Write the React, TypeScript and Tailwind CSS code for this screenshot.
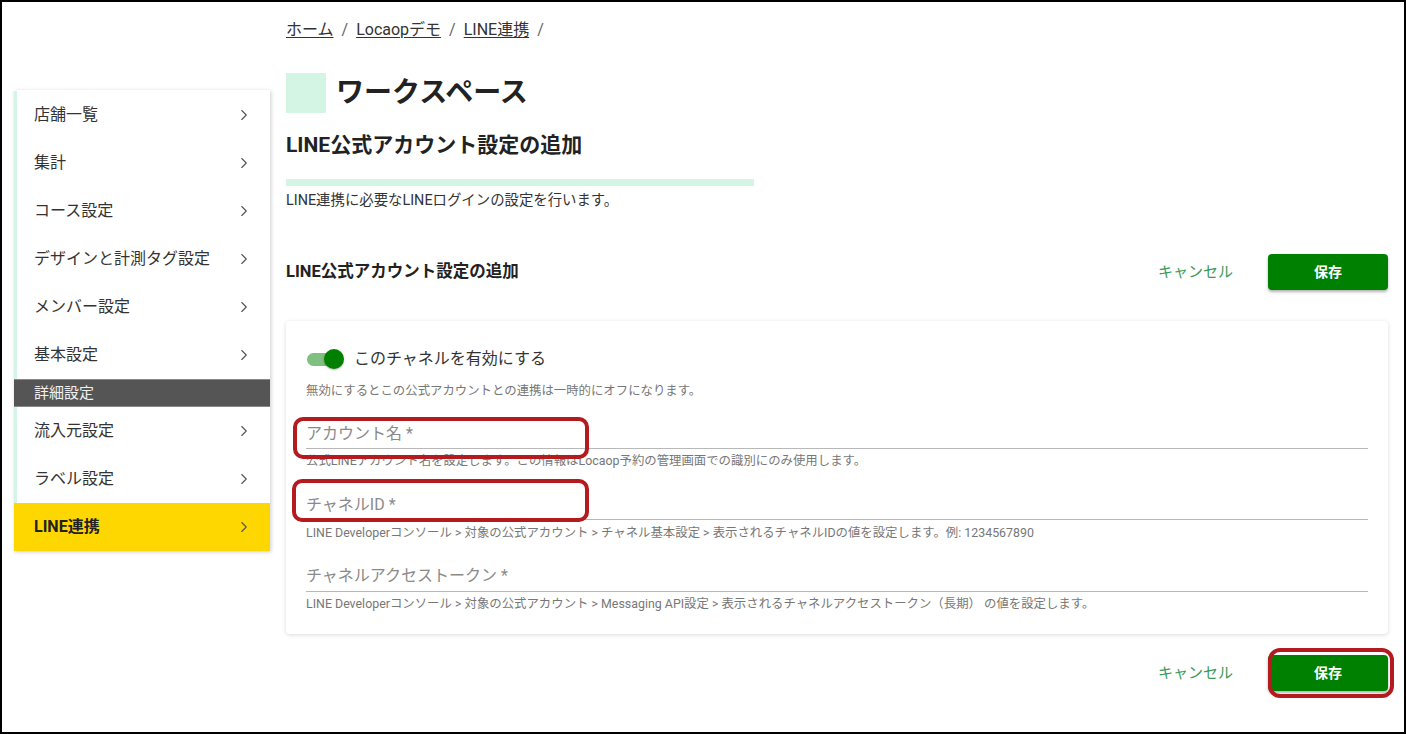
import React from "react";
import { ChevronRight } from "lucide-react";

const font = { fontFamily: 'Roboto, "Noto Sans CJK JP", sans-serif' };

function NavItem({ label }: { label: string }) {
  return (
    <div className="h-[48px] flex items-center justify-between border-l-[3px] border-[#d4f5e5] pl-[17px] pr-[17px] text-[16px] text-[#333]">
      <span>{label}</span>
      <ChevronRight size={18} strokeWidth={1.5} className="text-[#555]" />
    </div>
  );
}

function Field({
  label,
  help,
  mt,
  pb,
  hmt,
}: {
  label: string;
  help: string;
  mt: string;
  pb: string;
  hmt: string;
}) {
  return (
    <div>
      <div className={`${mt} ${pb} border-b border-[#b8b8b8] text-[16px] leading-[20px] text-[#8a8a8a]`}>
        {label}
      </div>
      <p className={`${hmt} h-[16px] text-[12.4px] leading-[16px] text-[#777]`}>{help}</p>
    </div>
  );
}

function Actions() {
  return (
    <div className="flex items-center gap-[35px]">
      <span className="text-[15px] text-[#3c9a56]">キャンセル</span>
      <button className="w-[120px] h-[36px] rounded-[4px] bg-[#008000] text-white text-[14px] font-bold shadow-[0_2px_3px_rgba(0,0,0,0.3)]">
        保存
      </button>
    </div>
  );
}

export default function App() {
  return (
    <div
      style={font}
      className="relative w-[1406px] h-[734px] border-2 border-black bg-white overflow-hidden"
    >
      <div className="flex items-start">
        {/* Sidebar */}
        <div className="ml-[12px] mt-[88px] w-[256px] bg-white shadow-[1px_1px_4px_rgba(0,0,0,0.2)]">
          <div className="pt-[1px]" />
          <NavItem label="店舗一覧" />
          <NavItem label="集計" />
          <NavItem label="コース設定" />
          <NavItem label="デザインと計測タグ設定" />
          <NavItem label="メンバー設定" />
          <NavItem label="基本設定" />
          <div className="h-[28px] bg-[#555] border-y border-[#888] flex items-center pl-[20px] text-[15px] text-[#f0f0f0]">
            詳細設定
          </div>
          <NavItem label="流入元設定" />
          <NavItem label="ラベル設定" />
          <div className="h-[48px] flex items-center justify-between bg-[#ffd700] pl-[20px] pr-[17px] text-[16px] font-bold text-[#222]">
            <span>LINE連携</span>
            <ChevronRight size={18} strokeWidth={1.5} className="text-[#555]" />
          </div>
        </div>

        {/* Main */}
        <div className="ml-[16px] w-[1102px]">
          <div className="mt-[18px] h-[20px] flex items-center gap-[8px] text-[16px] text-[#333]">
            <span className="underline underline-offset-2">ホーム</span>
            <span className="text-[#666]">/</span>
            <span className="underline underline-offset-2">Locaopデモ</span>
            <span className="text-[#666]">/</span>
            <span className="underline underline-offset-2">LINE連携</span>
            <span className="text-[#666]">/</span>
          </div>

          <div className="mt-[33px] flex items-center gap-[10px]">
            <div className="w-[40px] h-[40px] bg-[#d4f5e4]" />
            <h1 className="text-[28px] font-bold text-[#222] leading-[40px]">ワークスペース</h1>
          </div>

          <h2 className="mt-[19px] h-[26px] leading-[26px] text-[21px] font-bold text-[#222]">
            LINE公式アカウント設定の追加
          </h2>

          <div className="mt-[21px] w-[468px] h-[7px] bg-[#d4f5e4]" />

          <p className="mt-[6px] h-[18px] text-[14.4px] leading-[18px] text-[#333]">
            LINE連携に必要なLINEログインの設定を行います。
          </p>

          <div className="mt-[44px] h-[36px] flex items-center justify-between">
            <h3 className="text-[16.5px] font-bold text-[#222]">LINE公式アカウント設定の追加</h3>
            <Actions />
          </div>

          <div className="mt-[31px] rounded-[4px] bg-white shadow-[0_1px_4px_rgba(0,0,0,0.15)] px-[20px] pt-[26px] pb-[22px]">
            <div className="h-[24px] flex items-center gap-[10px]">
              <div className="relative w-[38px] h-[20px] flex items-center">
                <div className="w-[34px] h-[13px] rounded-full bg-[#7fbf7f] ml-[1px]" />
                <div className="absolute right-0 top-0 w-[20px] h-[20px] rounded-full bg-[#008000] shadow-[0_1px_2px_rgba(0,0,0,0.3)]" />
              </div>
              <span className="text-[16px] text-[#333]">このチャネルを有効にする</span>
            </div>
            <p className="mt-[12px] h-[16px] text-[12.4px] leading-[16px] text-[#777]">
              無効にするとこの公式アカウントとの連携は一時的にオフになります。
            </p>

            <Field
              label="アカウント名 *"
              help="公式LINEアカウント名を設定します。この情報はLocaop予約の管理画面での識別にのみ使用します。"
              mt="mt-[25px]"
              pb="pb-[4px]"
              hmt="mt-[4px]"
            />
            <Field
              label="チャネルID *"
              help="LINE Developerコンソール > 対象の公式アカウント > チャネル基本設定 > 表示されるチャネルIDの値を設定します。例: 1234567890"
              mt="mt-[26px]"
              pb="pb-[4px]"
              hmt="mt-[5px]"
            />
            <Field
              label="チャネルアクセストークン *"
              help="LINE Developerコンソール > 対象の公式アカウント > Messaging API設定 > 表示されるチャネルアクセストークン（長期） の値を設定します。"
              mt="mt-[25px]"
              pb="pb-[5px]"
              hmt="mt-[4px]"
            />
          </div>

          <div className="mt-[21px] h-[36px] flex items-center justify-end">
            <Actions />
          </div>
        </div>
      </div>

      {/* Red annotation outlines */}
      <div className="absolute left-[291px] top-[415px] w-[296px] h-[42px] rounded-[10px] border-[4px] border-[#b31b1f]" />
      <div className="absolute left-[290px] top-[477px] w-[297px] h-[43px] rounded-[10px] border-[4px] border-[#b31b1f]" />
      <div className="absolute left-[1266px] top-[646px] w-[126px] h-[50px] rounded-[12px] border-[4px] border-[#b31b1f]" />
    </div>
  );
}
